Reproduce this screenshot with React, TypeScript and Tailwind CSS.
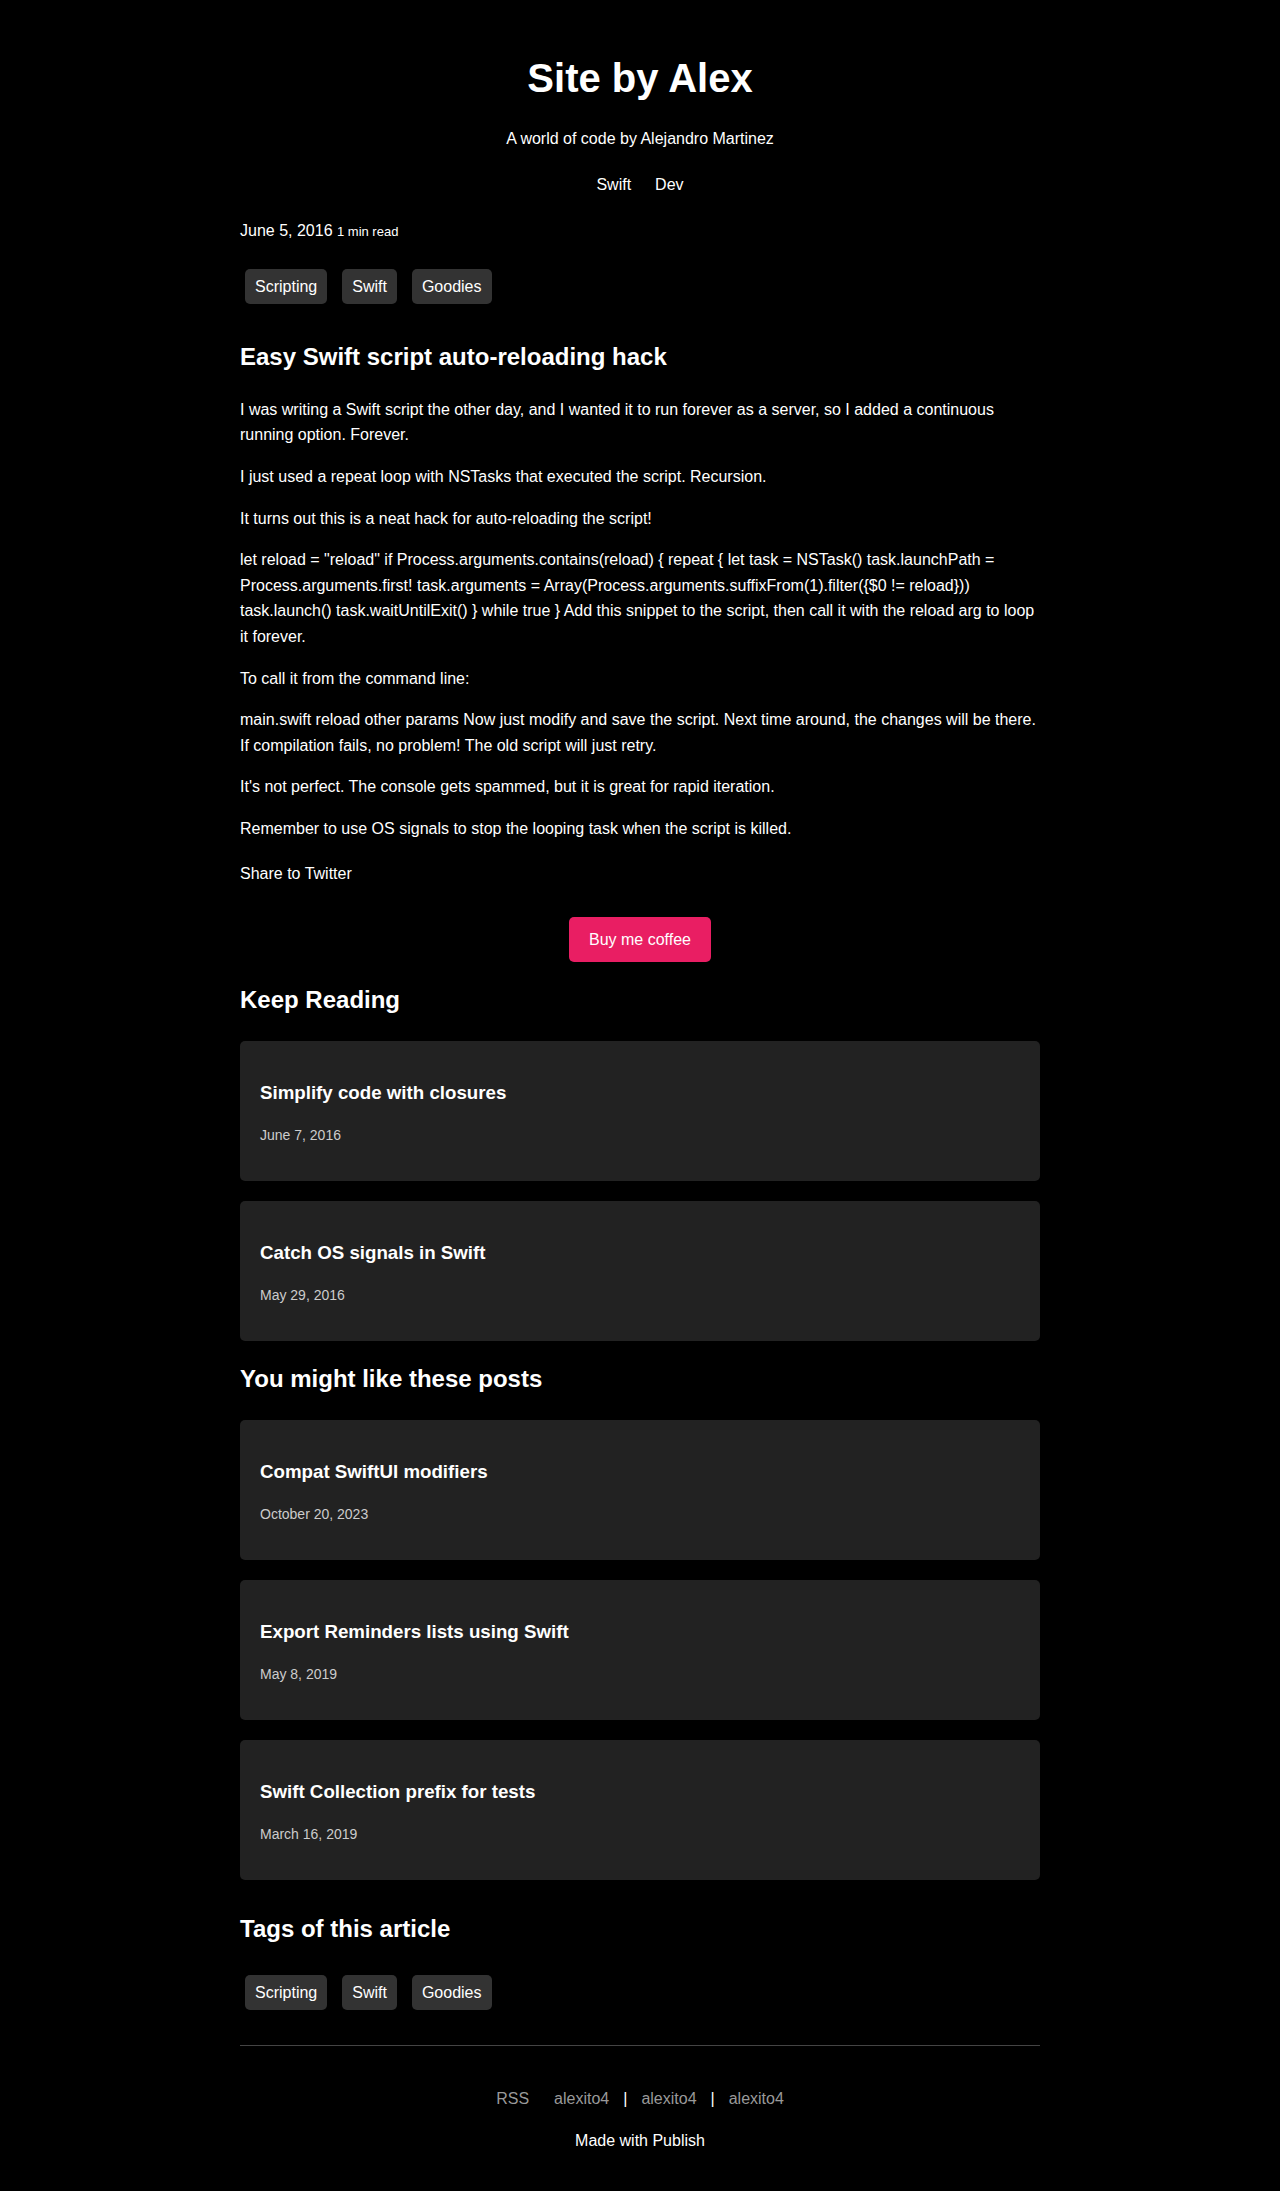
const tags = ["Scripting", "Swift", "Goodies"];

const keepReading = [
  { title: "Simplify code with closures", date: "June 7, 2016" },
  { title: "Catch OS signals in Swift", date: "May 29, 2016" },
];

const related = [
  { title: "Compat SwiftUI modifiers", date: "October 20, 2023" },
  { title: "Export Reminders lists using Swift", date: "May 8, 2019" },
  { title: "Swift Collection prefix for tests", date: "March 16, 2019" },
];

const paragraphs = [
  "I was writing a Swift script the other day, and I wanted it to run forever as a server, so I added a continuous running option. Forever.",
  "I just used a repeat loop with NSTasks that executed the script. Recursion.",
  "It turns out this is a neat hack for auto-reloading the script!",
  'let reload = "reload" if Process.arguments.contains(reload) { repeat { let task = NSTask() task.launchPath = Process.arguments.first! task.arguments = Array(Process.arguments.suffixFrom(1).filter({$0 != reload})) task.launch() task.waitUntilExit() } while true } Add this snippet to the script, then call it with the reload arg to loop it forever.',
  "To call it from the command line:",
  "main.swift reload other params Now just modify and save the script. Next time around, the changes will be there. If compilation fails, no problem! The old script will just retry.",
  "It's not perfect. The console gets spammed, but it is great for rapid iteration.",
  "Remember to use OS signals to stop the looping task when the script is killed.",
];

function TagList({ className }: { className: string }) {
  return (
    <ul className={`flex gap-[15px] pl-[5px] ${className}`}>
      {tags.map((tag) => (
        <li key={tag}>
          <a
            href="#"
            className="block rounded-[5px] bg-[#333] px-[10px] py-[5px] leading-[25px] text-white"
          >
            {tag}
          </a>
        </li>
      ))}
    </ul>
  );
}

function PostCard({ title, date }: { title: string; date: string }) {
  return (
    <a
      href="#"
      className="block rounded-[5px] bg-[#222] px-5 pt-[37px] pb-[35px]"
    >
      <h3 className="text-[18.72px] font-bold leading-[30px] text-white">
        {title}
      </h3>
      <p className="mt-4 text-[14px] leading-[22px] text-[#ccc]">{date}</p>
    </a>
  );
}

export default function App() {
  return (
    <div className="min-h-[2191px] bg-black text-[16px] leading-[1.6] text-white font-['Liberation_Sans',Arial,sans-serif]">
      {/* Site header */}
      <header className="flex flex-col items-center pt-[54px]">
        <h1 className="text-[40px] font-bold leading-[48px]">Site by Alex</h1>
        <p className="mt-[24px]">A world of code by Alejandro Martinez</p>
        <nav className="mt-[20px] flex gap-[24px]">
          <a href="#">Swift</a>
          <a href="#">Dev</a>
        </nav>
      </header>

      <main className="mx-auto w-[800px]">
        {/* Meta */}
        <div className="mt-[21px]">
          June 5, 2016 <span className="text-[13px]">1 min read</span>
        </div>
        <TagList className="mt-[25px]" />

        {/* Article */}
        <article>
          <h1 className="mt-[34px] text-[24px] font-bold leading-[38px]">
            Easy Swift script auto-reloading hack
          </h1>
          <div className="mt-[21px] flex flex-col gap-4">
            {paragraphs.map((p, i) => (
              <p key={i}>{p}</p>
            ))}
          </div>
          <p className="mt-[19px]">
            <a href="#">Share to Twitter</a>
          </p>
        </article>

        <div className="mt-[31px] flex justify-center">
          <a
            href="#"
            className="flex h-[45px] items-center rounded-[5px] bg-[#e91e63] px-5 text-white"
          >
            Buy me coffee
          </a>
        </div>

        <h2 className="mt-[19px] text-[24px] font-bold leading-[38px]">
          Keep Reading
        </h2>
        <div className="mt-[22px] flex flex-col gap-5">
          {keepReading.map((post) => (
            <PostCard key={post.title} {...post} />
          ))}
        </div>

        <h2 className="mt-[19px] text-[24px] font-bold leading-[38px]">
          You might like these posts
        </h2>
        <div className="mt-[22px] flex flex-col gap-5">
          {related.map((post) => (
            <PostCard key={post.title} {...post} />
          ))}
        </div>

        <h2 className="mt-[30px] text-[24px] font-bold leading-[38px]">
          Tags of this article
        </h2>
        <TagList className="mt-[27px]" />

        {/* Footer */}
        <footer className="mt-[35px] border-t border-[#444] pb-[37px] text-center">
          <div className="mt-[40px] flex justify-center">
            <a href="#" className="text-[#999]">RSS</a>
            <a href="#" className="ml-[25px] text-[#999]">alexito4</a>
            <span className="mx-[14px]">|</span>
            <a href="#" className="text-[#999]">alexito4</a>
            <span className="mx-[14px]">|</span>
            <a href="#" className="text-[#999]">alexito4</a>
          </div>
          <p className="mt-4">Made with Publish</p>
        </footer>
      </main>
    </div>
  );
}
